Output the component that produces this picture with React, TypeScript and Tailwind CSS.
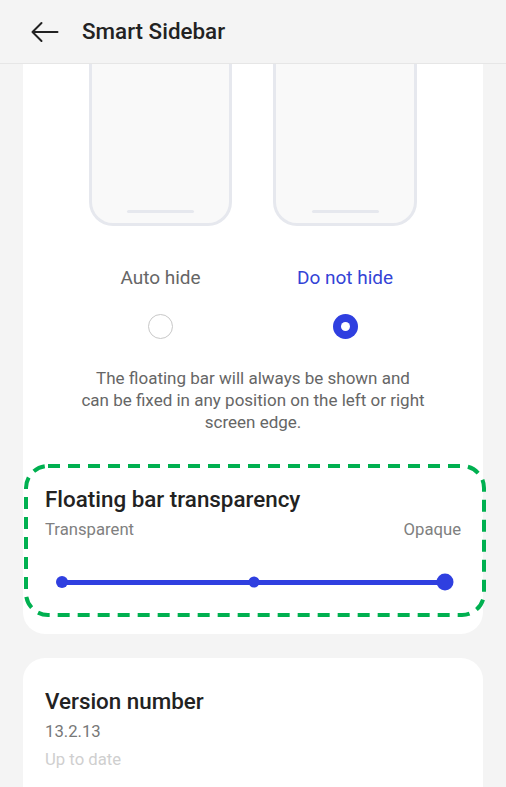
import React from "react";

export default function App() {
  return (
    <div
      className="w-[506px] h-[787px] overflow-hidden bg-[#f4f4f4] flex flex-col"
      style={{ fontFamily: "Roboto, 'Noto Sans', sans-serif" }}
    >
      {/* Header */}
      <div className="h-16 shrink-0 flex items-center border-b border-[#e6e6e6] bg-[#f4f4f4]">
        <svg width="28" height="24" viewBox="0 0 28 24" className="ml-[31px]" fill="none">
          <path d="M1.5 12H26.5M1.5 12L10.5 3M1.5 12L10.5 21" stroke="#222" strokeWidth="2" strokeLinecap="round" strokeLinejoin="round" />
        </svg>
        <div className="ml-[23px] text-[22.4px] font-medium text-[#222]">Smart Sidebar</div>
      </div>

      {/* Content */}
      <div className="flex-1 px-[23px] flex flex-col">
        <div className="bg-white rounded-b-[22px] flex flex-col items-center">
          {/* phones */}
          <div className="flex gap-[41px]">
            <div className="w-[143px] flex flex-col items-center">
              <div className="w-[143px] h-[162px] border-x-[3px] border-b-[3px] border-[#e6e8ee] rounded-b-[24px] bg-[#f9f9f9] flex items-end justify-center pb-[10px]">
                <div className="w-[67px] h-[3px] rounded-full bg-[#e6e8ee]" />
              </div>
              <div className="mt-[40px] text-[19px] leading-[24px] text-[#666]">Auto hide</div>
              <div className="mt-[24px] w-[25px] h-[25px] rounded-full border-[1.5px] border-[#c8c8c8] bg-white" />
            </div>
            <div className="w-[144px] flex flex-col items-center">
              <div className="w-[144px] h-[162px] border-x-[3px] border-b-[3px] border-[#e6e8ee] rounded-b-[24px] bg-[#f9f9f9] flex items-end justify-center pb-[10px]">
                <div className="w-[67px] h-[3px] rounded-full bg-[#e6e8ee]" />
              </div>
              <div className="mt-[40px] text-[19px] leading-[24px] text-[#3343d6]">Do not hide</div>
              <div className="mt-[24px] w-[25px] h-[25px] rounded-full bg-[#2f3fe0] flex items-center justify-center">
                <div className="w-[9px] h-[9px] rounded-full bg-white" />
              </div>
            </div>
          </div>

          <div className="mt-[28px] text-[17px] leading-[22px] text-[#666] text-center w-[380px]">
            The floating bar will always be shown and
            <br />
            can be fixed in any position on the left or right screen edge.
          </div>

          {/* transparency section */}
          <div className="relative mt-[30px] w-full h-[171px] px-[22px] pt-[22px]">
            <svg className="absolute left-[1px] top-[1px]" width="462" height="153" viewBox="0 0 462 153" fill="none">
              <rect x="2" y="2" width="458" height="149" rx="22" stroke="#00b050" strokeWidth="4" strokeDasharray="12 8" />
            </svg>
            <div className="text-[22.4px] leading-[28px] font-medium text-[#222]">Floating bar transparency</div>
            <div className="mt-[7px] flex justify-between text-[16.7px] leading-[20px] text-[#808080]">
              <span>Transparent</span>
              <span>Opaque</span>
            </div>
            <div className="mt-[33px] relative h-[18px] ml-[17px] mr-[16px]">
              <div className="absolute left-0 right-0 top-[6.5px] h-[5px] bg-[#2f3fe0]" />
              <div className="absolute left-0 top-[9px] -translate-x-1/2 -translate-y-1/2 w-[12px] h-[12px] rounded-full bg-[#2f3fe0]" />
              <div className="absolute left-1/2 top-[9px] -translate-x-1/2 -translate-y-1/2 w-[11px] h-[11px] rounded-full bg-[#2f3fe0]" />
              <div className="absolute left-full top-[9px] -translate-x-1/2 -translate-y-1/2 w-[17px] h-[17px] rounded-full bg-[#2f3fe0]" />
            </div>
          </div>
        </div>

        <div className="mt-[24px] bg-white rounded-t-[22px] px-[22px] pt-[29px] h-[200px]">
          <div className="text-[22.4px] leading-[28px] font-medium text-[#222]">Version number</div>
          <div className="mt-[6px] text-[16.7px] leading-[22px] text-[#777]">13.2.13</div>
          <div className="mt-[6px] text-[16.7px] leading-[22px] text-[#cfcfcf]">Up to date</div>
        </div>
      </div>
    </div>
  );
}
